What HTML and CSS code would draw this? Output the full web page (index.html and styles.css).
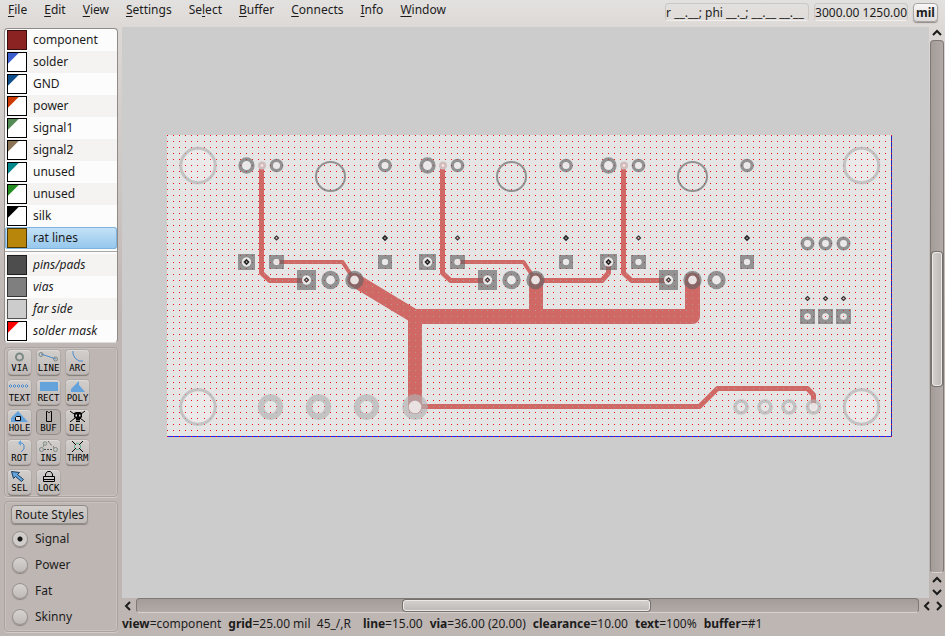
FILE: index.html
```html
<!DOCTYPE html>
<html lang="en">
<head>
<meta charset="utf-8">
<title>PCB layout editor</title>
<link rel="stylesheet" href="styles.css">
</head>
<body>
<header class="topbar">
  <nav class="menu">
    <a href="#"><u>F</u>ile</a>
    <a href="#"><u>E</u>dit</a>
    <a href="#"><u>V</u>iew</a>
    <a href="#"><u>S</u>ettings</a>
    <a href="#">Se<u>l</u>ect</a>
    <a href="#"><u>B</u>uffer</a>
    <a href="#"><u>C</u>onnects</a>
    <a href="#"><u>I</u>nfo</a>
    <a href="#"><u>W</u>indow</a>
  </nav>
  <div class="readouts">
    <span class="readout polar">r __.__; phi __._; __.__ __.__</span>
    <span class="readout">3000.00 1250.00</span>
    <button class="units">mil</button>
  </div>
</header>

<div class="work">
  <aside class="sidebar">
    <div class="layers">
      <button class="layer"><span class="swatch full component"></span>component</button>
      <button class="layer"><span class="swatch solder"></span>solder</button>
      <button class="layer"><span class="swatch gnd"></span>GND</button>
      <button class="layer"><span class="swatch power"></span>power</button>
      <button class="layer"><span class="swatch signal1"></span>signal1</button>
      <button class="layer"><span class="swatch signal2"></span>signal2</button>
      <button class="layer"><span class="swatch unused1"></span>unused</button>
      <button class="layer"><span class="swatch unused2"></span>unused</button>
      <button class="layer"><span class="swatch silk"></span>silk</button>
      <button class="layer selected"><span class="swatch full rat"></span>rat lines</button>
      <hr class="divider">
      <button class="layer virtual"><span class="swatch full pins"></span>pins/pads</button>
      <button class="layer virtual"><span class="swatch full vias"></span>vias</button>
      <button class="layer virtual"><span class="swatch full far"></span>far side</button>
      <button class="layer virtual"><span class="swatch mask"></span>solder mask</button>
    </div>

    <div class="tools">
      <button class="tool"><svg viewBox="0 0 23 12"><circle cx="11.500" cy="7" r="3.500" class="gr" stroke-width="2"/></svg><span>VIA</span></button>
      <button class="tool"><svg viewBox="0 0 23 12"><path d="M4 4l15 5" class="bl"/><circle cx="4" cy="4.500" r="2" class="gr"/><circle cx="18.500" cy="9" r="2" class="gr"/></svg><span>LINE</span></button>
      <button class="tool"><svg viewBox="0 0 23 12"><path d="M7 1v3l2 4 4 3h4" class="bl"/></svg><span>ARC</span></button>
      <button class="tool"><svg viewBox="0 0 23 12"><path d="M1 6l1.500-1.500L4 6 2.500 7.500zM5 6l1.500-1.500L8 6 6.500 7.500zM9 6l1.500-1.500L12 6l-1.500 1.500zM13 6l1.500-1.500L16 6l-1.500 1.500zM17 6l1.500-1.500L20 6l-1.500 1.500z" class="bl"/></svg><span>TEXT</span></button>
      <button class="tool"><svg viewBox="0 0 23 12"><path d="M3 2h18v9H3z" class="fill"/></svg><span>RECT</span></button>
      <button class="tool"><svg viewBox="0 0 23 12"><path d="M5 12V9l8-8v4l6 7z" class="fill"/></svg><span>POLY</span></button>
      <button class="tool"><svg viewBox="0 0 23 12"><path d="M3 12V8l7-7 10 11z" class="fill"/><path d="M7.500 10.500v-3l1-1h4v4z" class="bk white"/></svg><span>HOLE</span></button>
      <button class="tool pressed"><svg viewBox="0 0 23 12"><path d="M9.500 1.500v10h5v-10h-1l-1 1h-1l-1-1z" class="bk"/></svg><span>BUF</span></button>
      <button class="tool"><svg viewBox="0 0 23 12"><path d="M4 1l4 3M19 1l-4 3M4 12l5-4M19 12l-5-4" class="bk"/><path d="M8 3l2-1h4l2 1v4l-2 2v3h-4V9L8 7z"/><path d="M9.500 4.500h1.500v2H9.500zM13 4.500h1.500v2H13zM10.500 10h1v1h-1zM12.500 10h1v1h-1z" fill="#ddd"/></svg><span>DEL</span></button>
      <button class="tool"><svg viewBox="0 0 23 12"><path d="M11 3h3l2 2v4l-3 3" class="bl"/><path d="M10 3l3-3v6z" class="fill"/></svg><span>ROT</span></button>
      <button class="tool"><svg viewBox="0 0 23 12"><circle cx="8" cy="3.500" r="1.700" class="gr"/><path d="M11 1l4 5M6 6h1M16 7h1M7 9.500h9" class="bk dash"/><circle cx="4.500" cy="9.500" r="2" class="gr"/><circle cx="18.500" cy="9.500" r="2" class="gr"/></svg><span>INS</span></button>
      <button class="tool"><svg viewBox="0 0 23 12"><path d="M6 1l4 4M17 1l-4 4M6 12l4-4M17 12l-4-4" class="bk"/><path d="M10 3.500h3M8.500 5v3M14.500 5v3M10 9.500h3" class="gn"/></svg><span>THRM</span></button>
      <button class="tool"><svg viewBox="0 0 23 12"><path d="M3.500 1.500l8 1-2 2 6 5-2 2-6-5-2 2z" class="fill dark"/></svg><span>SEL</span></button>
      <button class="tool"><svg viewBox="0 0 23 12"><path d="M8.500 6V4l2-2.500h3l2 2.500v2M6.500 6.500h11v5h-11zM6 9.500h12" class="bk"/></svg><span>LOCK</span></button>
    </div>

    <div class="routes">
      <button class="route-button">Route Styles</button>
      <label><input type="radio" name="route" checked>Signal</label>
      <label><input type="radio" name="route">Power</label>
      <label><input type="radio" name="route">Fat</label>
      <label><input type="radio" name="route">Skinny</label>
    </div>
  </aside>

  <main class="editor">
    <div class="canvas">
      <svg class="board" viewBox="167 135 725 302">
        <defs>
          <path id="dots" stroke="#fff" d="M0 0h1M6 0h1M12 0h1M18 0h1M24 0h1M30 0h1M37 0h1M43 0h1M49 0h1M55 0h1M61 0h1M67 0h1M73 0h1M79 0h1M85 0h1M91 0h1M97 0h1M103 0h1M109 0h1M115 0h1M121 0h1M127 0h1M133 0h1M139 0h1M145 0h1M151 0h1M157 0h1M163 0h1M169 0h1M175 0h1" transform="translate(0 .5)"/>
          <pattern id="gridA" x="167" y="135" width="181" height="6" patternUnits="userSpaceOnUse"><use href="#dots"/></pattern>
          <pattern id="gridB" x="523" y="135" width="181" height="6" patternUnits="userSpaceOnUse"><use href="#dots"/></pattern>
          <pattern id="gridC" x="167" y="262" width="181" height="6" patternUnits="userSpaceOnUse"><use href="#dots"/></pattern>
          <pattern id="gridD" x="523" y="262" width="181" height="6" patternUnits="userSpaceOnUse"><use href="#dots"/></pattern>
          <mask id="grid" maskUnits="userSpaceOnUse" x="167" y="135" width="725" height="302">
            <rect x="167" y="135" width="391" height="126" fill="url(#gridA)"/>
            <rect x="558" y="135" width="334" height="126" fill="url(#gridB)"/>
            <rect x="167" y="262" width="391" height="175" fill="url(#gridC)"/>
            <rect x="558" y="262" width="334" height="175" fill="url(#gridD)"/>
          </mask>
          <g id="copper" fill="none" stroke-linecap="round" stroke-linejoin="round">
            <path stroke-width="5" d="M261.500 165.500V273l8 7.500H306M442.500 165.500V273l8 7.500H487M623.500 165.500V273l8 7.500H668M535.500 280.500H602l6.500-7.500V262M415 406.500H699.500l18-18h90l6 6.500v12"/>
            <path stroke-width="4" d="M276.500 262H342.500L354.500 280M457.500 262H523.500L535.500 280"/>
            <path stroke-width="14" d="M354.500 280L415 316.500V407M536 280v36"/>
            <path stroke-width="15" d="M415 316.500H692.500V280"/>
          </g>
          <mask id="onCopper" maskUnits="userSpaceOnUse" x="167" y="135" width="725" height="302"><use href="#copper" stroke="#fff"/></mask>
          <g id="pin"><path d="M0-2L2 0 0 2-2 0z" fill="#e8dede" stroke="#333" stroke-width="1.200"/><path d="M0 0h1v1H0z" fill="#c33"/></g>
          <g id="pinBold"><path d="M0-2L2 0 0 2-2 0z" fill="#eedada" stroke="#222" stroke-width="1.600"/></g>
          <g id="cell">
            <path class="pad" fill-rule="evenodd" d="M238 254h17v16h-17zM242 262a4.500 4.500 0 0 0 9 0 4.500 4.500 0 0 0-9 0z"/>
            <path class="pad" fill-rule="evenodd" d="M269 255h15v14h-15zM273.500 262a3 3 0 0 0 6 0 3 3 0 0 0-6 0z"/>
            <path class="pad" fill-rule="evenodd" d="M378 255h14v14h-14zM382 262a3 3 0 0 0 6 0 3 3 0 0 0-6 0z"/>
            <path class="pad" fill-rule="evenodd" d="M297 270h19v20h-19zM302 280a4.500 4.500 0 0 0 9 0 4.500 4.500 0 0 0-9 0z"/>
            <g class="hole"><circle cx="246.500" cy="262" r="4.500"/><circle cx="276.500" cy="262" r="3"/><circle cx="385" cy="262" r="3"/><circle cx="306.500" cy="280" r="4.500"/><circle cx="246.500" cy="165.500" r="4.500"/><circle cx="276.500" cy="165.500" r="3.500"/><circle cx="385" cy="165.500" r="3.500"/><circle cx="330.500" cy="280" r="4.500"/><circle cx="354.500" cy="280" r="4.500"/></g>
            <g class="ring">
              <circle cx="246.500" cy="165.500" r="6.300" stroke-width="3.700"/>
              <circle cx="276.500" cy="165.500" r="5.200" stroke-width="3.300"/>
              <circle cx="385" cy="165.500" r="5.200" stroke-width="3.300"/>
              <circle cx="330.500" cy="176.500" r="14.500" stroke-width="2"/>
              <circle cx="330.500" cy="280" r="6.800" stroke-width="4.800"/>
              <circle cx="354.500" cy="280" r="6.800" stroke-width="4.800"/>
            </g>
            <circle cx="262" cy="165.500" r="4" fill="#cfbfbf"/><circle cx="262" cy="165.500" r="1.800" fill="#eee" stroke="#dba9a9" stroke-width=".8"/>
            <use href="#pinBold" x="246.500" y="262"/><use href="#pin" x="306.500" y="280"/>
            <use href="#pin" x="276.500" y="238"/><use href="#pinBold" x="385" y="238"/>
          </g>
        </defs>
        <rect x="167" y="135" width="725" height="302" fill="#e5e5e5"/>
        <g class="hole"><circle cx="198" cy="165.500" r="17"/><circle cx="198" cy="407" r="17"/><circle cx="861.500" cy="165.500" r="17"/><circle cx="861.500" cy="407" r="17"/></g>
        <path d="M891.500 135v302" stroke="#2424b4"/><path d="M167 436.500h725" stroke="#2222ee"/>
        <rect x="167" y="135" width="725" height="302" fill="#ee0d0d" mask="url(#grid)"/>
        <use href="#copper" stroke="#d06866"/>
        <g mask="url(#onCopper)"><rect x="167" y="135" width="725" height="302" fill="#b59a8c" mask="url(#grid)"/></g>
        <g class="hole"><circle cx="415" cy="407" r="6.500"/><circle cx="813.500" cy="407" r="4.300"/></g>
        <g class="far-ring">
          <circle cx="198" cy="165.500" r="17.200" stroke-width="3"/><circle cx="198" cy="407" r="17.200" stroke-width="3"/>
          <circle cx="861.500" cy="165.500" r="17.200" stroke-width="3"/><circle cx="861.500" cy="407" r="17.200" stroke-width="3"/>
          <g stroke-width="6.400"><circle cx="270.500" cy="407" r="9.500"/><circle cx="318.500" cy="407" r="9.500"/><circle cx="366.500" cy="407" r="9.500"/><circle cx="415" cy="407" r="9.500"/></g>
          <g stroke-width="3.600"><circle cx="741" cy="407" r="6"/><circle cx="765" cy="407" r="6"/><circle cx="789" cy="407" r="6"/><circle cx="813.500" cy="407" r="6"/></g>
        </g>
        <use href="#cell"/><use href="#cell" x="181"/><use href="#cell" x="362"/>
        <g class="hole"><circle cx="807.500" cy="243.500" r="3.500"/><circle cx="825.500" cy="243.500" r="3.500"/><circle cx="843.500" cy="243.500" r="3.500"/></g>
        <g class="ring" stroke-width="3.500"><circle cx="807.500" cy="243.500" r="5.200"/><circle cx="825.500" cy="243.500" r="5.200"/><circle cx="843.500" cy="243.500" r="5.200"/></g>
        <path class="pad" d="M800 309h15v15h-15zM818 309h15v15h-15zM836 309h15v15h-15z"/>
        <g class="hole"><circle cx="807.500" cy="316.500" r="3.300"/><circle cx="825.500" cy="316.500" r="3.300"/><circle cx="843.500" cy="316.500" r="3.300"/></g>
        <use href="#pin" x="807.500" y="298.500"/><use href="#pin" x="825.500" y="298.500"/><use href="#pin" x="843.500" y="298.500"/>
        <path d="M807 316h1v1h-1zM825 316h1v1h-1zM843 316h1v1h-1z" fill="#e22"/>
      </svg>
    </div>
    <div class="vbar">
      <button class="arrow" aria-label="Scroll up"><svg viewBox="0 0 12 12"><path d="M2 8l4-4 4 4"/></svg></button>
      <div class="trough vertical"><div class="thumb"></div></div>
      <button class="arrow" aria-label="Scroll up"><svg viewBox="0 0 12 12"><path d="M2 8l4-4 4 4"/></svg></button>
      <button class="arrow" aria-label="Scroll down"><svg viewBox="0 0 12 12"><path d="M2 4l4 4 4-4"/></svg></button>
    </div>
    <div class="hbar">
      <button class="arrow" aria-label="Scroll left"><svg viewBox="0 0 12 12"><path d="M8 2L4 6l4 4"/></svg></button>
      <div class="trough horizontal"><div class="thumb"></div></div>
      <button class="arrow" aria-label="Scroll left"><svg viewBox="0 0 12 12"><path d="M8 2L4 6l4 4"/></svg></button>
      <button class="arrow" aria-label="Scroll right"><svg viewBox="0 0 12 12"><path d="M4 2l4 4-4 4"/></svg></button>
    </div>
    <footer class="status">
      <span><b>view</b>=component</span>
      <span><b>grid</b>=25.00 mil&nbsp; 45_/,R</span>
      <span class="wide"><b>line</b>=15.00</span>
      <span><b>via</b>=36.00 (20.00)</span>
      <span><b>clearance</b>=10.00</span>
      <span><b>text</b>=100%</span>
      <span><b>buffer</b>=#1</span>
    </footer>
  </main>
</div>
</body>
</html>
```
FILE: styles.css
```css
* { box-sizing: border-box; }

body {
  margin: 0;
  min-height: 100vh;
  display: flex;
  flex-direction: column;
  background: linear-gradient(#e3e1df, #dcd8d6 30px, #beb6b3 320px, #beb6b3);
  color: #1c1c1c;
  font: 12px/18px "Noto Sans", "Open Sans", sans-serif;
}

button {
  font: inherit;
  color: inherit;
  padding: 0;
  border: 0;
  background: none;
}

.topbar {
  display: flex;
  justify-content: space-between;
  height: 27px;
  padding: 1px 7px 0 8px;
}

.menu { display: flex; gap: 17px; }
.menu a { color: inherit; text-decoration: none; }
.menu u { text-underline-offset: 2px; }

.readouts { display: flex; align-items: flex-start; gap: 5px; padding-top: 2px; }

.readout {
  height: 18px;
  border: 1px solid #cbc7c5;
  border-bottom-color: #f2f0ef;
  border-radius: 4px;
  line-height: 17px;
  white-space: nowrap;
}
.polar { min-width: 144px; }

.units {
  width: 25px;
  height: 19px;
  border: 1px solid #aaa6a4;
  border-radius: 4px;
  background: linear-gradient(#f8f7f7, #dedbda);
  box-shadow: 0 1px 1px #8f8a88;
  font-weight: bold;
}

.work { flex: 1; display: flex; }

.sidebar {
  width: 122px;
  flex: none;
  padding: 1px 4px 4px 4px;
  display: flex;
  flex-direction: column;
  gap: 4px;
}

.layers {
  display: flex;
  flex-direction: column;
  border: 1px solid #918b88;
  border-bottom-color: #ddd;
  border-radius: 4px;
  background: #fcfcfc;
  overflow: hidden;
}

.layer {
  display: flex;
  align-items: center;
  gap: 6px;
  height: 22px;
  padding-left: 2px;
  white-space: nowrap;
}

.layer:nth-child(even) { background: #f4f3f2; }
.layer.virtual { font-style: italic; }
.layer.selected {
  background: linear-gradient(#c6e3f8, #94c6ec);
  box-shadow: inset 0 0 0 1px #7fb2dc;
  border-radius: 3px;
}

.divider { width: 100%; height: 5px; margin: 0; border: solid #fcfcfc; border-width: 2px 0; background: #a9a7a4; }

.swatch {
  width: 20px;
  height: 20px;
  border: 1px solid #000;
  background: linear-gradient(135deg, var(--ink) 7px, #fff 8px);
}
.swatch.full { background: var(--ink); border-color: rgba(0, 0, 0, .6); background-clip: border-box; }
.component { --ink: #8b2323; }
.solder { --ink: #3a5fcd; }
.gnd { --ink: #104e8b; }
.power { --ink: #cd3700; }
.signal1 { --ink: #548b54; }
.signal2 { --ink: #8b7355; }
.unused1 { --ink: #00868b; }
.unused2 { --ink: #228b22; }
.silk { --ink: #000; }
.rat { --ink: #b8860b; }
.pins { --ink: #4d4d4d; }
.vias { --ink: #7f7f7f; }
.far { --ink: #ccc; }
.mask { --ink: #f00; }

.tools, .routes {
  border: 1px solid #aaa3a0;
  border-radius: 4px;
  box-shadow: inset 0 0 0 1px #c8c1be, 0 1px 0 #d2ccca;
}

.tools {
  display: grid;
  grid-template-columns: repeat(3, 23px);
  gap: 6px;
  padding: 2px 3px;
}

.tool {
  height: 24px;
  border-radius: 4px;
  background: linear-gradient(#d2cecb, #bfbab7);
  box-shadow: 0 0 0 1px #b0aaa7, 0 2px 1px #807a77, inset 0 1px 0 #dedad8;
  display: flex;
  flex-direction: column;
  align-items: center;
  font: 9px/12px "DejaVu Sans Mono", monospace;
  color: #000;
}
.tool.pressed { background: #b5afac; box-shadow: 0 0 0 1px #928c89; }
.tool svg { width: 23px; height: 12px; flex: none; }
.gr { fill: none; stroke: #7b8985; }
.bl { fill: none; stroke: #4a8ace; }
.bk { fill: none; stroke: #000; }
.bk.white { fill: #ddd; }
.dash { stroke: #555; stroke-dasharray: 2 1; }
.gn { fill: none; stroke: #66b795; }
.fill { fill: #64a2dc; }
.dark { stroke: #1c3c5c; }

.routes {
  flex: 1;
  display: flex;
  flex-direction: column;
  align-items: flex-start;
  padding: 3px 6px 0;
}

.route-button {
  height: 19px;
  margin-bottom: 2px;
  padding: 0 3px;
  border: 1px solid #928c89;
  border-radius: 4px;
  background: linear-gradient(#d2cecb, #c1bcb9);
  box-shadow: 0 1px 1px #8a8481;
  line-height: 17px;
}

.routes label { display: flex; align-items: center; gap: 7px; height: 26px; }

.routes input {
  appearance: none;
  width: 16px;
  height: 16px;
  margin: 0 0 0 1px;
  border: 1px solid #9a9491;
  border-radius: 50%;
  background: linear-gradient(#d6d3d0, #bfbab7);
  box-shadow: 0 1px 1px #8a8481;
}
.routes input:checked { background: radial-gradient(circle, #151515 2px, #d0ccc9 3px); }

.editor {
  flex: 1;
  min-width: 0;
  display: grid;
  grid-template-columns: 1fr 16px;
  grid-template-rows: 1fr 15px 23px;
}

.canvas { background: #ccc; padding: 108px 0 0 45px; overflow: hidden; }
.board { display: block; width: 725px; height: 302px; }
.pad { fill: #626262; fill-opacity: .64; }
.ring { fill: none; stroke: #626262; stroke-opacity: .64; }
.far-ring { fill: none; stroke: #b2b2b2; stroke-opacity: .67; }
.hole { fill: #ebe9e9; fill-opacity: .95; }

.vbar { display: flex; flex-direction: column; padding: 0 1px; align-items: center; }
.hbar { grid-column: 1 / -1; display: flex; align-items: center; }
.arrow { width: 12px; height: 12px; flex: none; }
.arrow svg { display: block; width: 12px; height: 12px; fill: none; stroke: #1c1c1c; stroke-width: 2; }

.trough {
  flex: 1;
  display: flex;
  border: 1px solid #7f7976;
  border-bottom-color: #d8d3d1;
  border-radius: 4px;
}
.trough.vertical { width: 14px; margin: 1px 0; flex-direction: column; background: linear-gradient(90deg, #a39c99, #b1aaa7); }
.trough.vertical::before { content: ""; flex: 212; }
.trough.vertical::after { content: ""; flex: 187; }
.trough.horizontal { height: 15px; margin: 0 2px; background: linear-gradient(#a39c99, #b1aaa7); }
.trough.horizontal::before { content: ""; flex: 267; }
.trough.horizontal::after { content: ""; flex: 269; }

.thumb {
  border: 1px solid #ebe9e8;
  border-radius: 3px;
  box-shadow: 0 0 0 1px #77716e;
}
.vertical .thumb { flex: 133; width: 10px; margin: 0 1px; background: linear-gradient(90deg, #d2cfcd, #bfbbb8); }
.horizontal .thumb { flex: 246; height: 11px; margin: 1px 0; background: linear-gradient(#d2cfcd, #bfbbb8); }

.status {
  grid-column: 1 / -1;
  display: flex;
  gap: 7px;
  line-height: 22px;
  white-space: nowrap;
}
.status .wide { margin-left: 5px; }
```
